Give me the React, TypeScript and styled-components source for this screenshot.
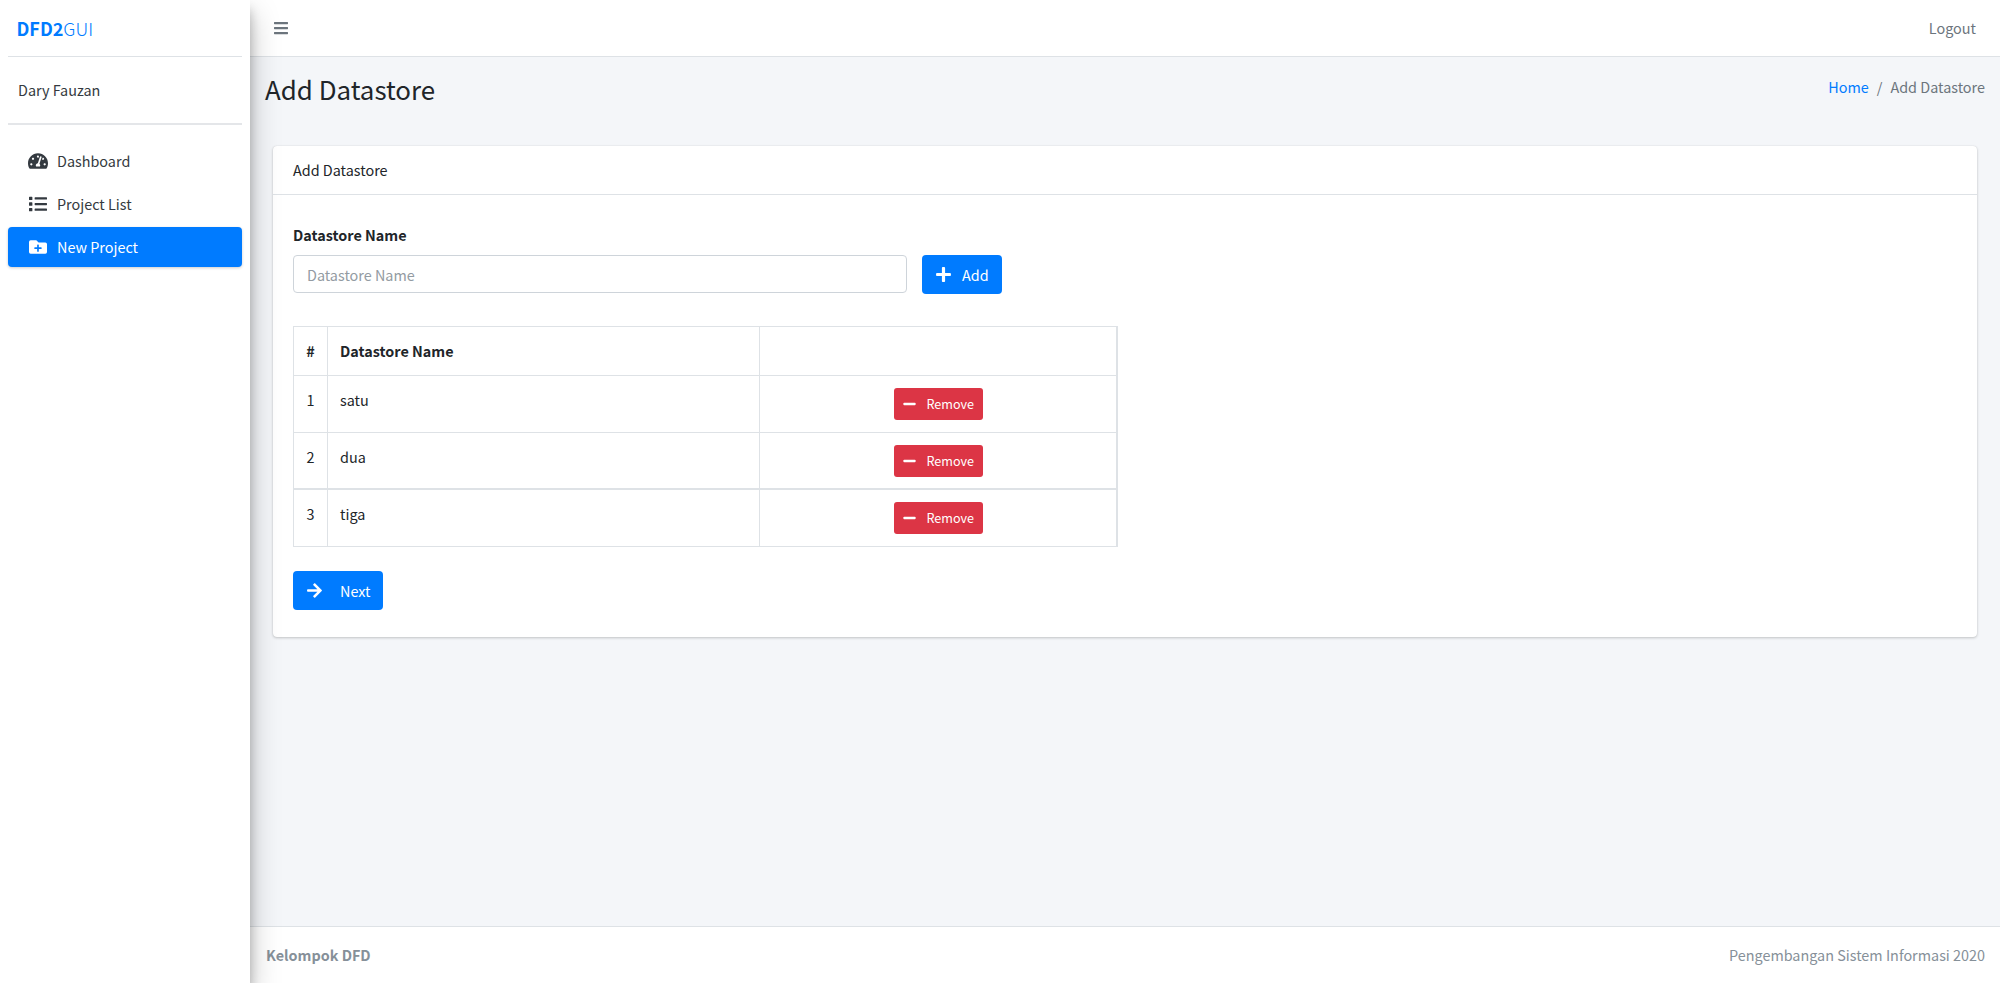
import React from "react";
import styled, { createGlobalStyle } from "styled-components";
import { FaTachometerAlt, FaList, FaFolderPlus, FaPlus, FaMinus, FaArrowRight, FaBars } from "react-icons/fa";

const Global = createGlobalStyle`
  * { box-sizing: border-box; }
  html, body { margin: 0; padding: 0; height: 100%; }
  body {
    font-family: "Noto Sans CJK SC", "Noto Sans", sans-serif;
    font-size: 14.4px;
    line-height: 24px;
    color: #212529;
    background: #f4f6f9;
  }
`;

const Shell = styled.div`
  display: flex;
  height: 983px;
  overflow: hidden;
`;

const Sidebar = styled.aside`
  width: 250px;
  flex: none;
  background: #fff;
  padding: 0 8px;
  box-shadow: 0 14px 28px rgba(0, 0, 0, 0.25), 0 10px 10px rgba(0, 0, 0, 0.22);
  position: relative;
  z-index: 2;
`;

const Brand = styled.div`
  height: 57px;
  border-bottom: 1px solid #dee2e6;
  padding: 0 8.5px;
  display: flex;
  align-items: center;
  font-size: 18px;
  color: #007bff;
  font-weight: 300;
  b { font-weight: 700; }
`;

const UserPanel = styled.div`
  height: 68px;
  border-bottom: 2px solid #e4e6e9;
  padding: 0 10px;
  display: flex;
  align-items: center;
  color: #343a40;
`;

const Nav = styled.nav`
  display: flex;
  flex-direction: column;
  gap: 3px;
  padding-top: 16px;
`;

const NavItem = styled.a<{ $active?: boolean }>`
  height: 40px;
  display: flex;
  align-items: center;
  padding: 0 20px;
  gap: 9px;
  border-radius: 4px;
  color: ${(p) => (p.$active ? "#fff" : "#343a40")};
  background: ${(p) => (p.$active ? "#007bff" : "transparent")};
  box-shadow: ${(p) => (p.$active ? "0 1px 3px rgba(0,0,0,.2)" : "none")};
  svg { width: 20px; height: 18px; flex: none; }
`;

const Main = styled.div`
  flex: 1;
  min-width: 0;
  display: flex;
  flex-direction: column;
`;

const TopBar = styled.header`
  height: 57px;
  flex: none;
  background: #fff;
  border-bottom: 1px solid #dee2e6;
  display: flex;
  align-items: center;
  justify-content: space-between;
  padding: 0 24px 0 24px;
  color: #6c757d;
  svg { width: 14px; height: 16px; display: block; }
`;

const Content = styled.main`
  flex: 1;
  min-height: 0;
  padding: 0 15px;
`;

const PageHead = styled.div`
  display: flex;
  justify-content: space-between;
  height: 89px;
  padding: 11px 0 0 0;
`;

const Title = styled.h1`
  margin: 0;
  font-size: 25.92px;
  font-weight: 400;
  line-height: 42px;
  color: #212529;
`;

const Crumbs = styled.div`
  display: flex;
  gap: 8px;
  padding-top: 7px;
  color: #6c757d;
  a { color: #007bff; }
`;

const Card = styled.section`
  margin: 0 8px;
  height: 491px;
  background: #fff;
  border-radius: 4px;
  box-shadow: 0 0 1px rgba(0, 0, 0, 0.125), 0 1px 3px rgba(0, 0, 0, 0.2);
`;

const CardHead = styled.div`
  height: 49px;
  padding: 12px 20px;
  border-bottom: 1px solid #dee2e6;
`;

const CardBody = styled.div`
  padding: 27px 20px 20px;
`;

const FieldLabel = styled.label`
  display: block;
  font-weight: 700;
  margin-bottom: 8px;
  margin-top: 1px;
`;

const FieldRow = styled.div`
  display: flex;
  gap: 15px;
  margin-bottom: 32px;
  align-items: flex-start;
`;

const Input = styled.input`
  width: 614px;
  height: 38px;
  padding: 0 13px;
  border: 1px solid #ced4da;
  border-radius: 4px;
  font: inherit;
  background: #fff;
  &::placeholder { color: #939ba2; opacity: 1; }
`;

const Button = styled.button<{ $gap: number }>`
  height: 39px;
  padding: 0 13px 0 14px;
  display: inline-flex;
  align-items: center;
  gap: ${(p) => p.$gap}px;
  border: 0;
  border-radius: 4px;
  background: #007bff;
  color: #fff;
  font: inherit;
  svg { width: 15px; height: 17px; flex: none; }
`;

const RemoveButton = styled.button`
  width: 89px;
  height: 32px;
  padding: 0 9px;
  display: inline-flex;
  align-items: center;
  gap: 11px;
  border: 0;
  border-radius: 3px;
  background: #dc3545;
  color: #fff;
  font: inherit;
  font-size: 12.6px;
  svg { width: 13px; height: 14px; flex: none; }
`;

const Table = styled.table`
  width: 825px;
  table-layout: fixed;
  border-collapse: separate;
  border-spacing: 0;
  border-top: 1px solid #dee2e6;
  border-left: 1px solid #dee2e6;
  border-right: 2px solid #dee2e6;
  margin-bottom: 24px;
`;

const Th = styled.th`
  height: 49px;
  padding: 0 12px;
  font-weight: 700;
  text-align: left;
  border-bottom: 1px solid #dee2e6;
  border-right: 1px solid #dee2e6;
  &:first-child { text-align: center; padding: 0; }
  &:last-child { border-right: 0; }
`;

const Td = styled.td<{ $heavy?: boolean }>`
  height: 57px;
  padding: 14px 12px 0;
  vertical-align: top;
  line-height: 20px;
  border-bottom: ${(p) => (p.$heavy ? 2 : 1)}px solid #dee2e6;
  border-right: 1px solid #dee2e6;
  &:first-child { text-align: center; padding: 14px 0 0; }
  &:last-child { border-right: 0; text-align: center; padding: 12px 12px 0 12px; }
`;

const Footer = styled.footer`
  height: 57px;
  flex: none;
  background: #fff;
  border-top: 1px solid #dee2e6;
  display: flex;
  align-items: center;
  justify-content: space-between;
  padding: 0 15px 0 16px;
  color: #869099;
  b { font-weight: 700; }
`;

const rows = ["satu", "dua", "tiga"];

export default function App() {
  return (
    <Shell>
      <Global />
      <Sidebar>
        <Brand><b>DFD2</b>GUI</Brand>
        <UserPanel>Dary Fauzan</UserPanel>
        <Nav>
          <NavItem><FaTachometerAlt />Dashboard</NavItem>
          <NavItem><FaList />Project List</NavItem>
          <NavItem $active><FaFolderPlus />New Project</NavItem>
        </Nav>
      </Sidebar>
      <Main>
        <TopBar>
          <FaBars />
          <span>Logout</span>
        </TopBar>
        <Content>
          <PageHead>
            <Title>Add Datastore</Title>
            <Crumbs><a>Home</a><span>/</span><span>Add Datastore</span></Crumbs>
          </PageHead>
          <Card>
            <CardHead>Add Datastore</CardHead>
            <CardBody>
              <FieldLabel>Datastore Name</FieldLabel>
              <FieldRow>
                <Input placeholder="Datastore Name" />
                <Button $gap={11}><FaPlus />Add</Button>
              </FieldRow>
              <Table>
                <colgroup>
                  <col style={{ width: 34 }} />
                  <col style={{ width: 432 }} />
                  <col />
                </colgroup>
                <thead>
                  <tr><Th>#</Th><Th>Datastore Name</Th><Th /></tr>
                </thead>
                <tbody>
                  {rows.map((r, i) => (
                    <tr key={r}>
                      <Td $heavy={i === 1}>{i + 1}</Td>
                      <Td $heavy={i === 1}>{r}</Td>
                      <Td $heavy={i === 1}><RemoveButton><FaMinus />Remove</RemoveButton></Td>
                    </tr>
                  ))}
                </tbody>
              </Table>
              <Button $gap={18}><FaArrowRight />Next</Button>
            </CardBody>
          </Card>
        </Content>
        <Footer>
          <b>Kelompok DFD</b>
          <span>Pengembangan Sistem Informasi 2020</span>
        </Footer>
      </Main>
    </Shell>
  );
}
